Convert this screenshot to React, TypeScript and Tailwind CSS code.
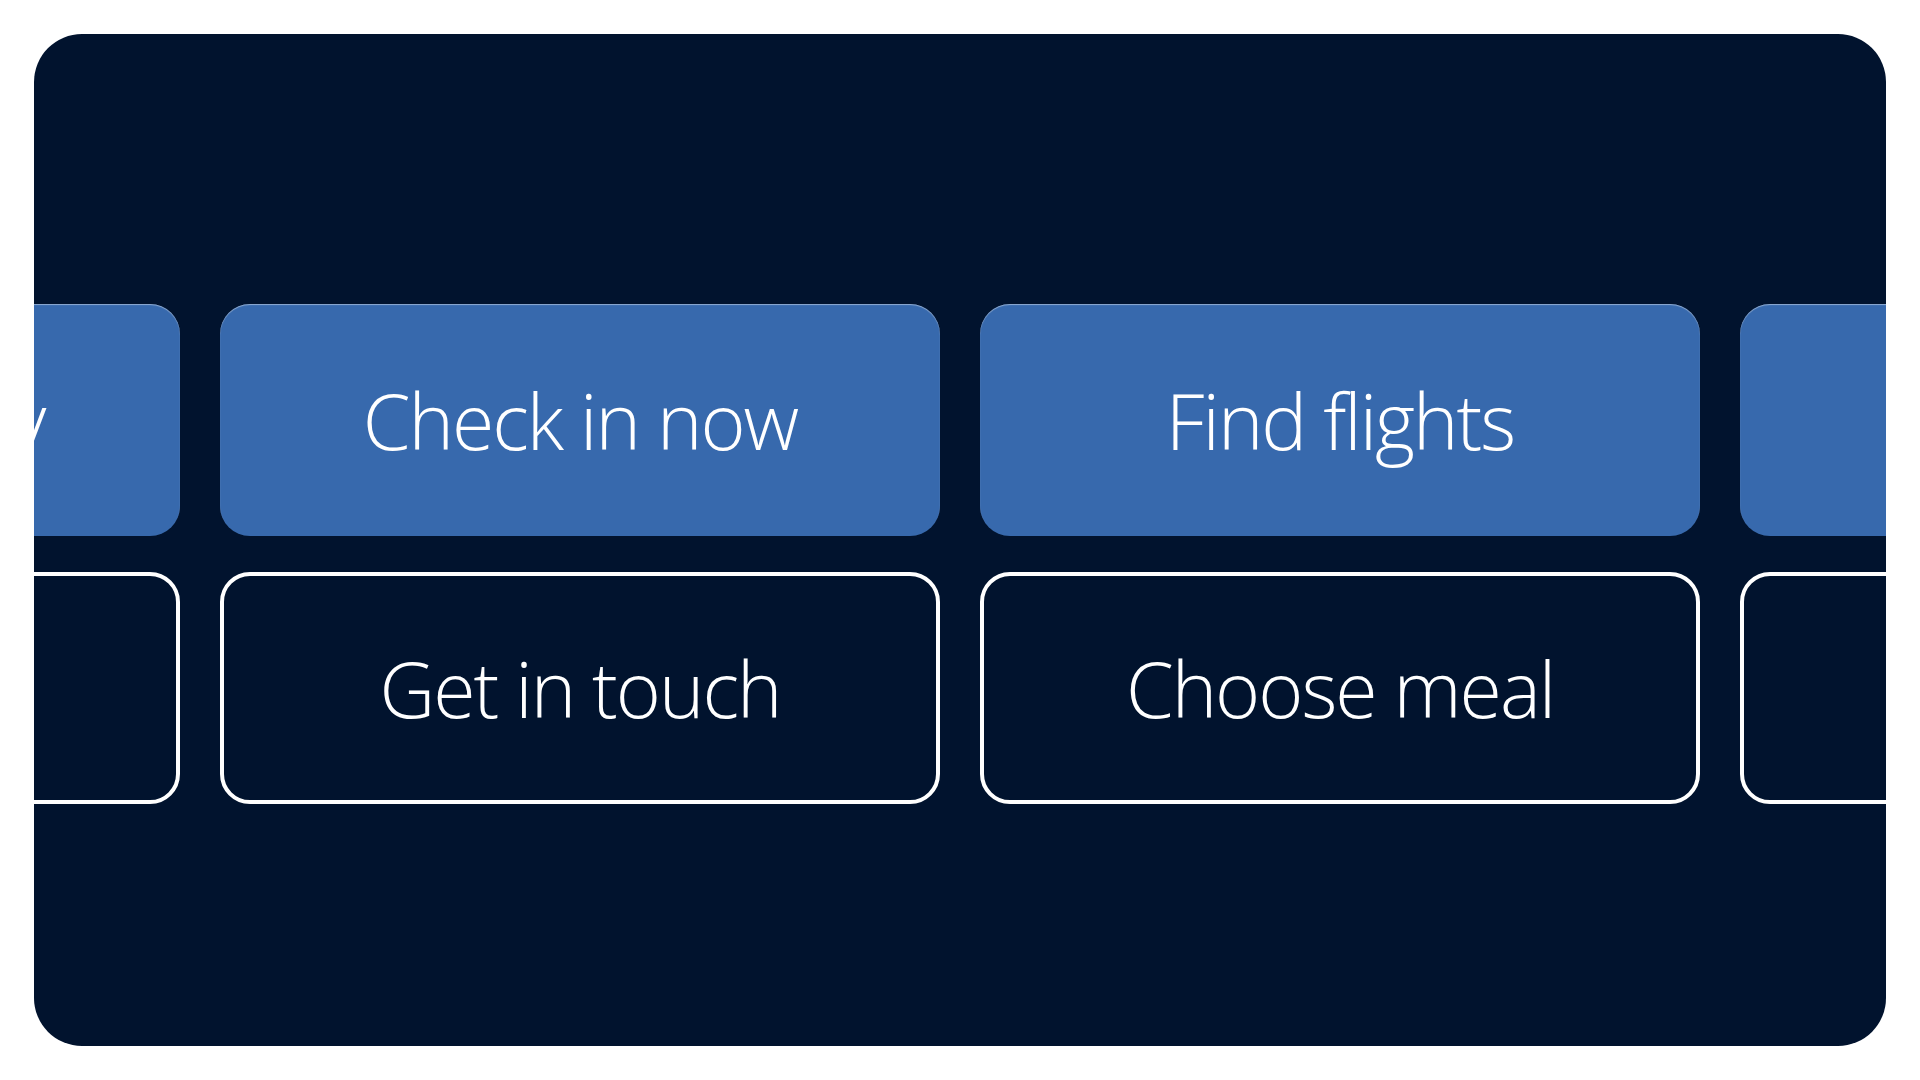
const columns = [
  { primary: "Begin journey", secondary: "Help centre" },
  { primary: "Check in now", secondary: "Get in touch" },
  { primary: "Find flights", secondary: "Choose meal" },
  { primary: "Join the club", secondary: "Upgrade seat" },
];

function ActionColumn({ primary, secondary }: { primary: string; secondary: string }) {
  return (
    <div className="flex w-[720px] shrink-0 flex-col gap-9">
      <button className="flex h-[232px] items-center justify-center rounded-[30px] bg-[#3769ad] shadow-[inset_0_1px_1px_rgba(255,255,255,0.45)]">
        <span className="whitespace-nowrap text-[77px] font-[350] leading-none tracking-[-2px] text-white">
          {primary}
        </span>
      </button>
      <button className="flex h-[232px] items-center justify-center rounded-[30px] border-4 border-white">
        <span className="whitespace-nowrap text-[77px] font-[350] leading-none tracking-[-2px] text-white">
          {secondary}
        </span>
      </button>
    </div>
  );
}

export default function App() {
  return (
    <div
      className="min-h-screen bg-white p-[34px]"
      style={{ fontFamily: '"Open Sans", "Noto Sans", sans-serif' }}
    >
      <div className="h-[1012px] overflow-hidden rounded-[48px] bg-[#01132e] pt-[270px]">
        <div className="-ml-[574px] flex gap-10">
          {columns.map((c) => (
            <ActionColumn key={c.primary} primary={c.primary} secondary={c.secondary} />
          ))}
        </div>
      </div>
    </div>
  );
}
